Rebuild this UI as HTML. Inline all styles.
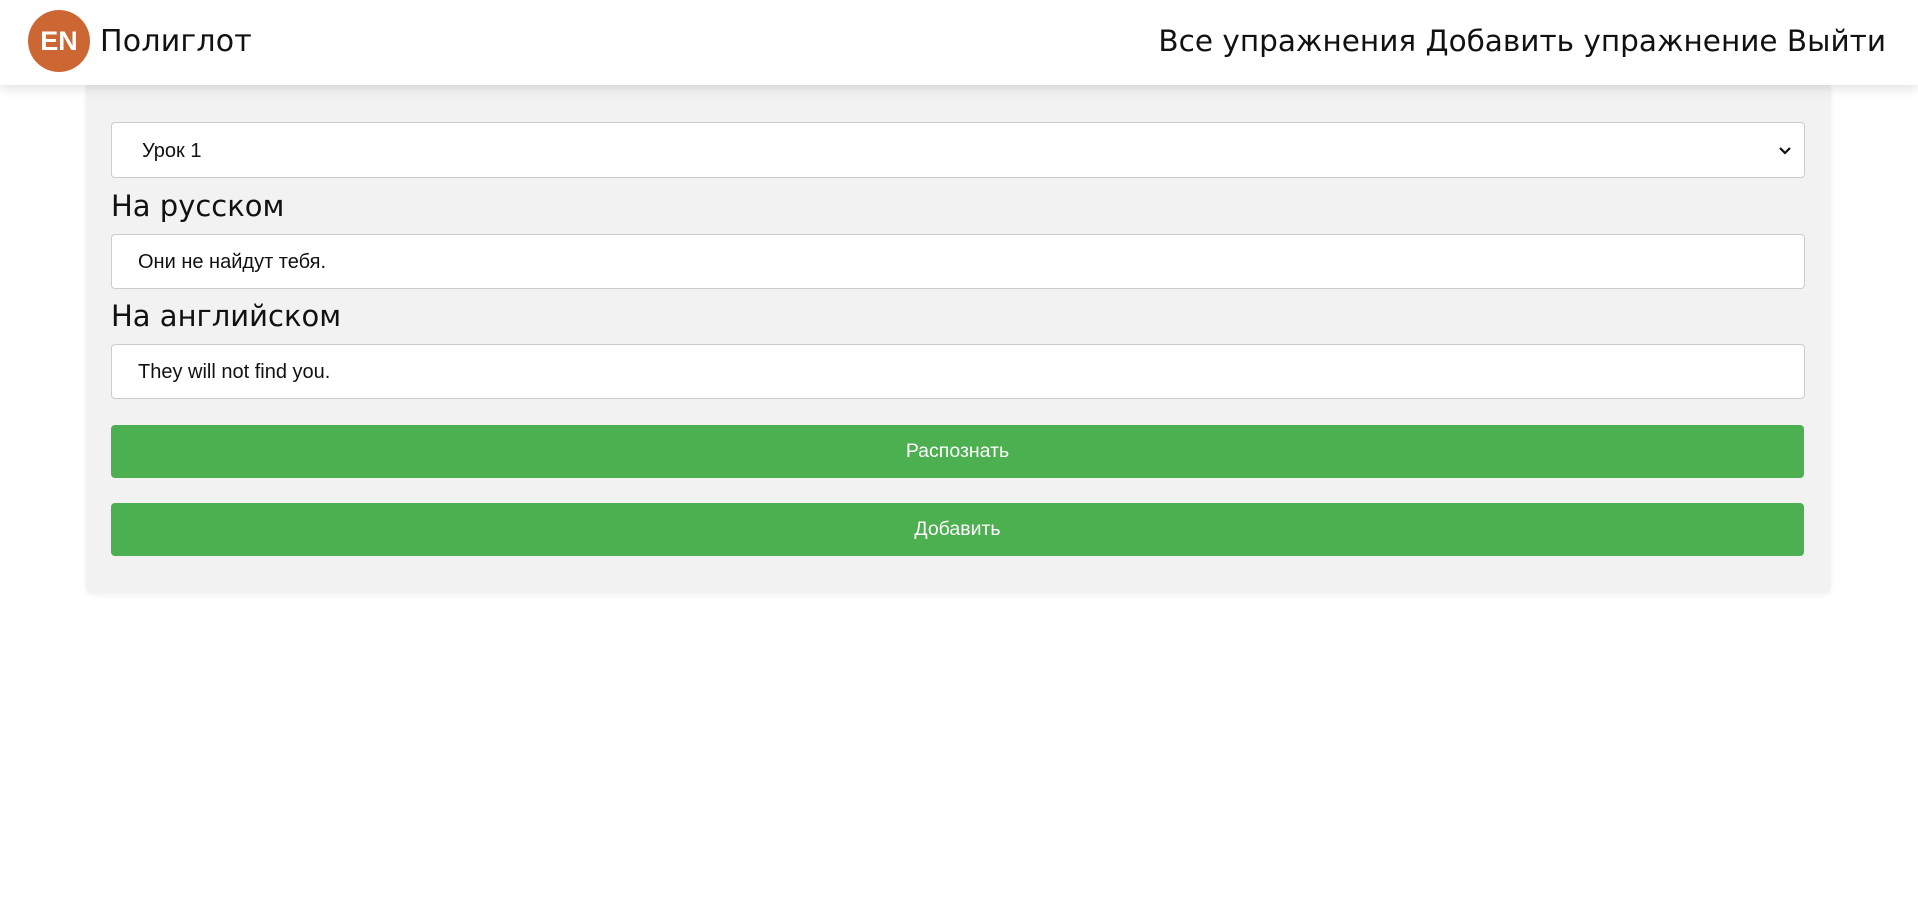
<!DOCTYPE html>
<html><head><meta charset="utf-8"><style>
body{margin:0;background:#fff;font-family:"Liberation Sans",Arial,sans-serif;width:1918px;height:902px;overflow:hidden;position:relative}
.hdr{position:absolute;left:0;top:0;width:1918px;height:85px;background:#fff;box-shadow:0 2px 12px rgba(0,0,0,.15);z-index:2}
.logo{position:absolute;left:28px;top:10px;width:62px;height:62px;border-radius:50%;background:#cc6633;color:#fff;font-weight:bold;font-size:27px;line-height:62px;text-align:center}
.brand{position:absolute;left:100px;top:24px;font-size:30px;color:#111;font-family:"DejaVu Sans","Liberation Sans",sans-serif;letter-spacing:.2px}
.nav{position:absolute;right:32px;top:24px;font-size:29.5px;color:#111;font-family:"DejaVu Sans","Liberation Sans",sans-serif}
.card{position:absolute;left:86px;top:85px;width:1745px;height:508px;background:#f2f2f2;border-radius:0 0 7px 7px;box-shadow:0 2px 6px rgba(0,0,0,.06)}
.f{position:absolute;left:25px;width:1694px;background:#fff;border:1px solid #ccc;border-radius:4px;font-size:20px;color:#111;box-sizing:border-box;padding-left:30px;display:flex;align-items:center}
.lbl{position:absolute;left:25px;font-size:29px;color:#111;font-family:"DejaVu Sans","Liberation Sans",sans-serif}
.btn{position:absolute;left:25px;width:1693px;height:53px;background:#4caf50;border-radius:4px;color:#fff;font-size:19.5px;display:flex;align-items:center;justify-content:center}
</style></head><body>
<div class="hdr"><div class="logo">EN</div><div class="brand">Полиглот</div><div class="nav">Все упражнения Добавить упражнение Выйти</div></div>
<div class="card">
<div class="f" style="top:37px;height:56px;padding-left:30px;padding-top:3px">Урок 1<svg style="position:absolute;right:12px;top:23px" width="14" height="10" viewBox="0 0 14 10"><path d="M2 2l5 5 5-5" stroke="#111" stroke-width="2.2" fill="none"/></svg></div>
<div class="lbl" style="top:104px">На русском</div>
<div class="f" style="top:149px;height:55px;padding-left:26px;padding-top:2px">Они не найдут тебя.</div>
<div class="lbl" style="top:214px">На английском</div>
<div class="f" style="top:259px;height:55px;padding-left:26px;padding-top:2px">They will not find you.</div>
<div class="btn" style="top:340px">Распознать</div>
<div class="btn" style="top:418px">Добавить</div>
</div>
</body></html>
